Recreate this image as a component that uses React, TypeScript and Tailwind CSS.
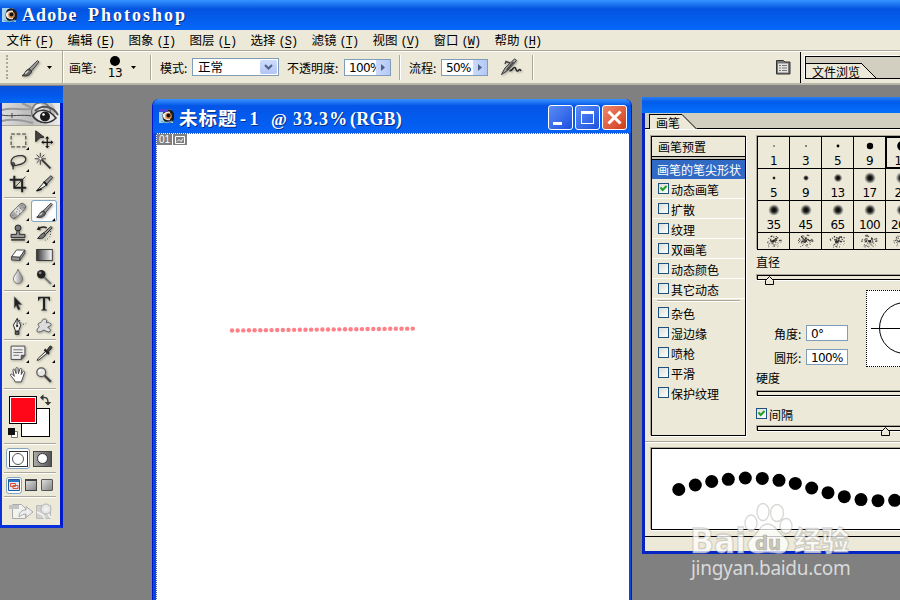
import { Fragment, type ReactNode } from "react";

const menus = [
  ["文件", "F"],
  ["编辑", "E"],
  ["图象", "I"],
  ["图层", "L"],
  ["选择", "S"],
  ["滤镜", "T"],
  ["视图", "V"],
  ["窗口", "W"],
  ["帮助", "H"],
];

const dynamics = [
  { label: "动态画笔", checked: true },
  { label: "扩散" },
  { label: "纹理" },
  { label: "双画笔" },
  { label: "动态颜色" },
  { label: "其它动态" },
];

const extras = ["杂色", "湿边缘", "喷枪", "平滑", "保护纹理"];

const brushes = [
  { size: 1, r: 0.7 },
  { size: 3, r: 0.8 },
  { size: 5, r: 1.4 },
  { size: 9, r: 3.2 },
  { size: 13, r: 4.8 },
  { size: 5, r: 1.9, soft: true },
  { size: 9, r: 3, soft: true },
  { size: 13, r: 4.4, soft: true },
  { size: 17, r: 5.8, soft: true },
  { size: 21, r: 6.2, soft: true },
  { size: 35, r: 5.8, soft: true },
  { size: 45, r: 5.8, soft: true },
  { size: 65, r: 5.8, soft: true },
  { size: 100, r: 5.8, soft: true },
  { size: 200, r: 5.8, soft: true },
];

const strokeDots = [
  [678.8, 489.5],
  [695.3, 485],
  [711.7, 481.5],
  [728.3, 479.3],
  [745.3, 478],
  [762.3, 478.4],
  [779, 480.3],
  [795.3, 483.4],
  [811.7, 488],
  [828, 492.7],
  [844.3, 496.7],
  [861, 499.6],
  [878, 500.7],
  [894.7, 500.3],
];

function BrushGlyph() {
  return (
    <>
      <path d="M18.5 2.5 20 4l-7.500 9-2.500-2.200z" fill="#999" stroke="#333" strokeWidth=".9" />
      <path d="m10 10.800 2.600 2.300c-.6 3.800-4.600 5.700-9.600 4.600 2.800-.8 3-5.600 7-6.900z" fill="#666" stroke="#222" strokeWidth=".9" />
      <path d="M6 15.500c1.500-.5 2-2 3.500-2.500" stroke="#ddd" strokeWidth="1.200" />
    </>
  );
}

const tools: { glyph: ReactNode; more?: boolean; active?: boolean }[][] = [
  [
    {
      more: true,
      glyph: <rect x="3.500" y="4.500" width="16" height="14" stroke="#222" strokeDasharray="4 2" />,
    },
    {
      glyph: (
        <>
          <path d="m2 1 9 7-4.500.5L2 13z" fill="#444" stroke="#222" />
          <path d="M14.500 8v11M9 13.500h11" stroke="#111" strokeWidth="1.300" />
          <path d="m14.500 7-2.200 2.500h4.400zM14.500 20l-2.200-2.500h4.400zM8 13.500l2.500-2.200v4.400zM21 13.500l-2.500-2.200v4.400z" fill="#111" />
        </>
      ),
    },
    {
      more: true,
      glyph: (
        <path
          d="M5.500 16C2 12 3 7 8 5s11-1 11.500 2.500S15 13.500 10 14.500c-4 .7-6-.5-5.500-2s3-.5 2.500 1.500-2.500 2.500-1 5"
          stroke="#333"
          strokeWidth="1.400"
        />
      ),
    },
    {
      glyph: (
        <>
          <path d="m8.500 8.500 9.500 9.500" stroke="#333" strokeWidth="2" />
          <path d="M7 1v4M7 9v5M1 7.500h4M9 7.500h4M3 3l2.500 2.500M11.500 3 9 5.500M3 12l2.500-2.500" stroke="#333" />
          <circle cx="7" cy="7.300" r="1.700" fill="#fff" stroke="#555" />
        </>
      ),
    },
    {
      glyph: (
        <>
          <path d="M7 2v13h13M2 6.500h13.500V20" stroke="#222" strokeWidth="2.200" />
          <path d="M7.500 14.500 19 3" stroke="#333" />
        </>
      ),
    },
    {
      more: true,
      glyph: (
        <>
          <path d="m18.500 2 2 2-6.500 7-2.500-2.500z" fill="#999" stroke="#222" />
          <path d="m11.500 8.500 2.500 2.500-2 2.500L3 18.500z" fill="#eee" stroke="#222" />
          <path d="m10.500 8.500 4 4M3 18.500l5.500-2" stroke="#111" strokeWidth="1.600" />
        </>
      ),
    },
  ],
  [
    {
      more: true,
      glyph: (
        <>
          <rect x="1" y="7.200" width="20" height="7.500" rx="3.500" transform="rotate(-45 11 11)" fill="#aaa" stroke="#666" />
          <rect x="7.500" y="7.500" width="7" height="7" transform="rotate(-45 11 11)" fill="#ddd" />
          <path d="M5 16h1M7 18h1M15 5h1M17 7h1M10 9h1M12 11h1M9 12h1M12 14h1M13 8h1" stroke="#555" />
        </>
      ),
    },
    { more: true, active: true, glyph: <BrushGlyph /> },
    {
      more: true,
      glyph: (
        <>
          <circle cx="11" cy="5.500" r="3.200" fill="#777" stroke="#222" />
          <path d="M10 8.500h2l.7 4h5.800v3.500h-15v-3.500h5.800z" fill="#999" stroke="#222" />
          <path d="M3.500 18.500h15" stroke="#222" strokeWidth="1.500" />
        </>
      ),
    },
    {
      more: true,
      glyph: (
        <>
          <path d="m18.500 4 1.500 1.300-7.500 7.500-2-1.800z" fill="#999" stroke="#222" />
          <path d="m10.500 11 2 1.800c-.5 3-4.500 5-8.500 4 2.500-1.200 3-5 6.500-5.800z" fill="#777" stroke="#222" />
          <path d="M5 6.500c3-2.500 6-2.500 9-1" stroke="#222" strokeWidth="1.400" />
          <path d="m3 7.500 4.500.5L5.500 3.500z" fill="#222" />
          <path d="M18 9c1 4-1 8-6 10" stroke="#222" strokeDasharray="1 2" />
        </>
      ),
    },
    {
      more: true,
      glyph: (
        <>
          <path d="m9.500 5.500 9 .2-5.500 7.800-9-.5z" fill="#fff" stroke="#444" />
          <path d="m4 13 9 .5v3.500l-9-.5zM13 13.500l5.500-7.800V9L13 17z" fill="#999" stroke="#444" />
        </>
      ),
    },
    {
      more: true,
      glyph: <rect x="3" y="5" width="17" height="12" fill="url(#ramp)" stroke="#333" />,
    },
    {
      more: true,
      glyph: <path d="M11 2.500c1 4 5 7 5 10.500a5 5 0 0 1-10 0C6 9.500 10 6.500 11 2.500z" fill="url(#silver)" stroke="#777" />,
    },
    {
      more: true,
      glyph: (
        <>
          <path d="m11 11 7.500 7.500" stroke="#777" strokeWidth="2" />
          <circle cx="8" cy="8" r="4.600" fill="#222" />
          <circle cx="6.800" cy="6.500" r="1.500" fill="#888" />
        </>
      ),
    },
  ],
  [
    { more: true, glyph: <path d="m7 3 8 8.500h-4l2.300 5-2 1-2.300-5L7 15.500z" fill="#222" stroke="#555" strokeWidth=".5" /> },
    {
      more: true,
      glyph: (
        <path
          d="M4.500 3h13v4.500h-1c-.3-2-1.200-2.800-3-2.800h-1.300V16c0 1 .7 1.300 2 1.300v.7H7.800v-.7c1.300 0 2-.3 2-1.300V4.700H8.500c-1.800 0-2.700.8-3 2.800h-1z"
          fill="#222"
        />
      ),
    },
    {
      more: true,
      glyph: (
        <>
          <path d="M10 3 6 10l2.300 6.500h3.400L14 10z" fill="#eee" stroke="#222" />
          <path d="M10 4v7M8 17h4v3H8z" fill="#666" stroke="#222" />
          <circle cx="10" cy="11" r="1.200" fill="#222" />
          <path d="M10 3c3 0 3 5 6 6 3 .5 4-1 5-3" stroke="#222" strokeDasharray="1 2" />
        </>
      ),
    },
    {
      more: true,
      glyph: (
        <path
          d="M9 5c1-2.500 5-2 5 .5l-.5 2c2-.8 6 .5 5 2.500-.7 1.500-3 1.500-3.500 2.500 2 1 4 3 2.500 4.500-2 1.500-5-1-7-1.500-1.500 1-5 3-7 1.500-1-2 1.500-4 2.500-5.500-1.500-1-2-3-.5-3.500C7 7.500 8.500 7 9 5z"
          fill="#ddd"
          stroke="#555"
        />
      ),
    },
  ],
  [
    {
      more: true,
      glyph: (
        <>
          <path d="M3.500 3.500h15v10l-4 4.500h-11z" fill="#eee" stroke="#444" />
          <path d="M18.500 13.500h-4V18z" fill="#777" stroke="#444" />
          <path d="M6 7.500h10M6 10.500h10M6 13.500h6" stroke="#666" />
        </>
      ),
    },
    {
      more: true,
      glyph: (
        <>
          <path d="m13 9-8.500 8-1 2 2-.5L14.500 11z" fill="#eee" stroke="#222" />
          <path d="m11.500 7 5 5" stroke="#222" strokeWidth="2.500" />
          <path d="m14 8.500 3-4.500c1-1.500 3.500.5 2.200 2L15.500 10z" fill="#444" stroke="#222" />
        </>
      ),
    },
    {
      glyph: (
        <path
          d="M8 18.500c-1-3-3.500-5-5-7-.8-1.300 1-2 2-1l2 2L5.500 6c-.3-1.500 1.500-1.800 2-.5L9 9.500 8.700 4c0-1.500 2-1.500 2.200 0l.6 5.500L13 4.500c.5-1.300 2.200-.8 2 .5l-.5 5.500 1.800-3.200c.8-1 2.200-.3 1.800 1l-2 6-1.600 4.200z"
          fill="#fff"
          stroke="#444"
        />
      ),
    },
    {
      glyph: (
        <>
          <path d="m11 11 7.500 7.500" stroke="#444" strokeWidth="2.600" />
          <circle cx="8" cy="8" r="4.800" fill="#e5e5e5" stroke="#555" strokeWidth="1.300" />
          <path d="M5.500 8c0-2 1-2.500 2.500-2.500" stroke="#fff" strokeWidth="1.200" />
        </>
      ),
    },
  ],
];

function Icon({ children }: { children: ReactNode }) {
  return (
    <svg width="22" height="22" viewBox="0 0 22 22" fill="none" className="drop-shadow-[1px_1px_1px_rgba(0,0,0,0.3)]">
      {children}
    </svg>
  );
}

function Rule() {
  return <div className="h-[2px] w-[52px] ml-[2px] shrink-0 border-t border-t-[#aca899] border-b border-b-white" />;
}

function VRule() {
  return <div className="w-[2px] h-[25px] shrink-0 border-l border-l-[#aca899] border-r border-r-white" />;
}

function Caret() {
  return (
    <svg width="5" height="3" className="shrink-0">
      <path d="M0 0h5L2.500 3z" fill="#000" />
    </svg>
  );
}

// eye logo of the application
function EyeLogo({ doc }: { doc?: boolean }) {
  return (
    <svg width="16" height="16" viewBox="0 0 16 16" className="shrink-0">
      <path d="M0 1h11l3 4v10H0z" fill="#a9d3ea" />
      <path d="M5 3c3-3 9-2 10 3v5c-1 4-6 5-9 3-3-3-3-8-1-11z" fill="#1b1c22" />
      <path d="M4 6c2-2 5-3 7-2v8c-3 1-6-1-7-3z" fill="#f0eee6" />
      <circle cx="9.500" cy="8" r="3.300" fill="#d98b4a" />
      <circle cx="9.500" cy="7.500" r="2" fill="#111" />
      <path d="M2 13c3 2 8 2 11 0" stroke="#6fa9cf" strokeWidth="1.500" fill="none" />
      {doc && <path d="M0 1h9v3H0z" fill="#4b44d8" />}
    </svg>
  );
}

function Checkbox({ checked }: { checked?: boolean }) {
  return (
    <div className="w-[11px] h-[11px] shrink-0 border border-[#1c5180] bg-linear-to-br from-[#dcdcd7] to-white">
      {checked && (
        <svg width="9" height="9" viewBox="0 0 9 9" fill="none">
          <path d="M1.500 3.500 3.700 6 7.500 2" stroke="#21a121" strokeWidth="2" />
        </svg>
      )}
    </div>
  );
}

function ValueStepper({ value }: { value: string }) {
  return (
    <div className="w-[47px] h-[17px] shrink-0 flex bg-white border border-[#7f9db9]">
      <div className="w-[31px] shrink-0 pl-[4px] overflow-hidden font-['DejaVu_Sans'] text-[12px] leading-[17px] tracking-[-0.600px]">
        {value}
      </div>
      <div className="flex-1 bg-linear-to-r from-[#cbdafd] to-[#b4c8f6] flex items-center justify-center">
        <svg width="4" height="7">
          <path d="M0 0v7l4-3.500z" fill="#4d6185" />
        </svg>
      </div>
    </div>
  );
}

function SliderBar({ thumb }: { thumb?: string }) {
  return (
    <div className="relative h-[5px] w-[150px] ml-[1px] shrink-0 border border-black shadow-[-1px_-1px_0_#aca899,0_1px_0_#fff]">
      {thumb && (
        <svg width="9" height="10" className={`absolute top-0 ${thumb}`}>
          <path d="M.5 8.500v-4l4-4 4 4v4z" fill="#ece9d8" stroke="#000" />
        </svg>
      )}
    </div>
  );
}

function TopBars() {
  return (
    <>
      <header className="h-[30px] shrink-0 flex items-center pl-[2px] gap-[4px] bg-linear-to-b from-[#3593ff] via-[#0453e0] via-30% to-[#0668fa]">
        <EyeLogo />
        <h1 className="flex gap-[11px] font-['Liberation_Serif'] font-bold text-[18px] leading-[30px] text-white [text-shadow:1px_1px_0_#0a2f86] whitespace-nowrap">
          <span className="w-[55px] tracking-[1.100px]">Adobe</span>
          <span className="tracking-[2px]">Photoshop</span>
        </h1>
      </header>

      <nav className="h-[20px] shrink-0 flex pl-[6.5px] bg-[#ece9d8] text-[12.500px] leading-[19px]">
        {menus.map(([name, key]) => (
          <div key={key} className="w-[61px] shrink-0 whitespace-nowrap">
            {name}
            <span className="font-['Liberation_Mono'] text-[12px] tracking-[-1px] ml-[3px]">
              (<u className="underline-offset-2">{key}</u>)
            </span>
          </div>
        ))}
      </nav>

      <div className="h-[35px] shrink-0 flex bg-[#ece9d8] border-t border-t-[#aca899] border-b-2 border-b-[#b9b6a6] shadow-[inset_0_1px_0_#fff]">
        <div className="w-[62px] shrink-0 flex items-center pl-[6px]">
          <div className="w-[2px] h-[24px] border-l-2 border-dotted border-[#aca899]" />
          <div className="ml-[13px] w-[20px] mt-[1px]">
            <svg width="20" height="18" viewBox="2 1 20 18" fill="none" className="drop-shadow-[1px_1px_1px_rgba(0,0,0,0.3)]">
              <BrushGlyph />
            </svg>
          </div>
          <div className="ml-[6px]">
            <Caret />
          </div>
        </div>
        <div className="w-[2px] border-l border-l-[#aca899] border-r border-r-white" />
        <div className="flex items-center pl-[5px] text-[12px] leading-[16px] whitespace-nowrap">
          <span className="w-[38px] pt-px">画笔:</span>
          <div className="w-[16px] flex flex-col items-center">
            <div className="w-[10px] h-[10px] rounded-full bg-black mt-[3px]" />
            <span className="font-['DejaVu_Sans'] text-[12px] leading-[15px] tracking-[-0.500px]">13</span>
          </div>
          <div className="ml-[8px] mr-[14px]">
            <Caret />
          </div>
          <VRule />
          <span className="w-[32px] ml-[8px] pt-px">模式:</span>
          <div className="w-[87px] h-[18px] flex items-center justify-between bg-white border border-[#7f9db9] pl-[5px] pr-px text-[12.500px]">
            正常
            <div className="w-[17px] h-[14px] rounded-[2px] bg-linear-to-b from-[#cfdcfd] to-[#b1c5f5] flex items-center justify-center">
              <svg width="9" height="6" fill="none">
                <path d="m1 1 3.500 3.500L8 1" stroke="#4d6185" strokeWidth="2" />
              </svg>
            </div>
          </div>
          <span className="w-[57px] ml-[8px] pt-px">不透明度:</span>
          <ValueStepper value="100%" />
          <div className="ml-[8px]">
            <VRule />
          </div>
          <span className="w-[32px] ml-[8px] pt-px">流程:</span>
          <ValueStepper value="50%" />
          <svg width="22" height="18" viewBox="0 0 22 18" fill="none" className="ml-[12px] mr-[10px] drop-shadow-[1px_1px_1px_rgba(0,0,0,0.3)]">
            <path d="m14.500 1 2 1.500L8 12l-6.500 4.500L5 10z" fill="#aaa" stroke="#333" />
            <path d="M10 5 6 3.500 5 6M13.500 4 6.500 12" stroke="#444" strokeWidth="1.400" />
            <path d="M9.500 12.500c3 1 3-3 5-3s1 4 3 3.500c1.500-.5 2-3 3.500 0" stroke="#222" strokeWidth="1.500" />
          </svg>
          <VRule />
        </div>
        <div className="flex-1 flex items-center justify-end">
          <svg width="16" height="16" viewBox="0 0 16 16" fill="none" className="mr-[9px]">
            <path d="M1.500 1.500h7l1.500 1.500H15v12H1.500z" fill="#777" stroke="#333" />
            <path d="M3 4.500h10v9H3z" fill="#e4e4e0" />
            <path d="M4 6.500h2M4 9h2M4 11.500h2M7 6.500h5M7 9h5M7 11.500h5" stroke="#777" />
          </svg>
          <div className="w-px h-[31px] bg-black" />
        </div>
        <div className="w-[99px] pl-[4px] pt-[5px] shrink-0">
          <div className="h-[23px] border border-r-0 border-black bg-[#d2cfc0] flex flex-col shadow-[-1px_-1px_0_#fff]">
            <div className="h-[7px] shrink-0 border-b border-black mr-[38px]" />
            <div className="h-[14px] flex">
              <div className="w-[55px] pl-[6px] bg-[#ece9d8] text-[12px] leading-[15px] whitespace-nowrap">文件浏览</div>
              <svg width="16" height="15" className="-mt-px shrink-0">
                <path d="M0 0 15 15H0z" fill="#ece9d8" />
                <path d="M0 0 15 15" stroke="#000" />
              </svg>
            </div>
          </div>
        </div>
      </div>
    </>
  );
}

function Toolbox() {
  return (
    <aside className="absolute left-0 top-[1px] w-[63px] h-[442px] flex flex-col bg-[#ece9d8] border-l-2 border-r-3 border-b-3 border-[#0831d9] border-r-[#0019c9]">
      <div className="h-[17px] -ml-[2px] -mr-[3px] shrink-0 bg-linear-to-b from-[#0b50d8] via-[#0257ea] to-[#0467f8]" />
      <svg width="58" height="23" className="shrink-0">
        <rect width="58" height="23" fill="url(#hair)" />
        <path d="M0 7c12-4 22 2 32-2M0 18c10-3 20-1 31 2M20 0l12 6" stroke="#999" strokeWidth="2" fill="none" />
        <path d="M0 12c8 2 20-1 30 1M10 10v5" stroke="#444" fill="none" />
        <circle cx="41" cy="9" r="12.500" fill="#c4c4c4" />
        <circle cx="39" cy="9" r="9.500" fill="none" stroke="#777" strokeWidth="1.500" />
        <circle cx="37" cy="5" r="4" fill="#f2f2f2" />
        <path d="M31 13c5-8 15-8 23 2-7 7-17 6-23-2z" fill="#e6e6e6" stroke="#333" strokeWidth="1.500" />
        <path d="M33 8C40 1 51 3 56 12" stroke="#555" strokeWidth="2" fill="none" />
        <circle cx="43" cy="13.500" r="5" fill="#1a1a1a" />
        <circle cx="41.500" cy="11.500" r="1.300" fill="#fff" />
        <path d="M0 22.500h58" stroke="#aca899" />
      </svg>
      <div className="h-[3px]" />
      {tools.map((group, g) => (
        <Fragment key={g}>
          <div className="grid grid-cols-[26px_26px] ml-[3px] mb-[2px]">
            {group.map((tool, i) => (
              <div
                key={i}
                className={
                  tool.active
                    ? "relative w-[26px] h-[22px] flex items-center justify-center rounded-[3px] bg-white shadow-[inset_0_0_0_1px_#7fa5c7]"
                    : "relative h-[22px] flex items-center justify-center"
                }
              >
                <div className="scale-[0.92]">
                  <Icon>{tool.glyph}</Icon>
                </div>
                {tool.more && (
                  <svg width="3" height="3" className="absolute right-[2px] bottom-[1px]">
                    <path d="M3 0v3H0z" fill="#000" />
                  </svg>
                )}
              </div>
            ))}
          </div>
          <Rule />
          <div className="h-px shrink-0" />
        </Fragment>
      ))}

      <svg width="56" height="52" viewBox="2 391 56 52" fill="none" className="shrink-0">
        <rect x="21.500" y="408.500" width="28" height="28" fill="#fff" stroke="#000" />
        <rect x="9.500" y="396.500" width="27" height="27" fill="#fff" stroke="#000" />
        <rect x="11" y="398" width="24" height="24" fill="#ff0718" />
        <path d="M41.500 397.500h3c2.500 0 3.500 1.500 3.500 5" stroke="#444" strokeWidth="1.500" />
        <path d="m40 397.500 3.500-3.300v6.600zM48 405.500l-3.300-3.500h6.600z" fill="#333" />
        <path d="M11.500 431.500h6v6h-6z" fill="#fff" stroke="#777" />
        <path d="M8 428h7v7H8z" fill="#111" />
      </svg>
      <Rule />
      <div className="h-[27px] shrink-0 flex items-center pl-[4px] gap-[3px]">
        <div className="w-[24px] h-[21px] rounded-[3px] border border-[#7fa5c7] bg-white flex items-center justify-center">
          <div className="w-[19px] h-[16px] border border-[#333] flex items-center justify-center">
            <div className="w-[12px] h-[12px] rounded-full border border-[#555] bg-white" />
          </div>
        </div>
        <div className="w-[19px] h-[16px] border border-[#444] bg-linear-to-r from-[#aaa] to-[#555] flex items-center justify-center">
          <div className="w-[11px] h-[11px] rounded-full border border-[#333] bg-white" />
        </div>
      </div>
      <Rule />
      <div className="h-[22px] shrink-0 flex items-center pl-[4px]">
        <div className="w-[16px] h-[17px] rounded-[3px] border border-[#7fa5c7] bg-white flex items-center justify-center">
          <svg width="12" height="12" fill="none">
            <path d="M.5.5h11v11H.500z" fill="#dbe6f7" stroke="#1f5b9c" />
            <path d="M1 2h10" stroke="#2d74c4" strokeWidth="2" />
            <path d="M2.500 4.500h5v3h-5zM5 6.500h5v3H5z" stroke="#e0502a" />
          </svg>
        </div>
        <div className="w-[12px] h-[12px] ml-[3px] border border-[#444] border-t-2 bg-linear-to-br from-[#ddd] to-[#888]" />
        <div className="w-[12px] h-[12px] ml-[4px] border border-[#555] rounded-[1px] bg-linear-to-br from-[#ddd] to-[#888]" />
      </div>
      <Rule />
      <svg width="50" height="19" className="mt-[4px] ml-[6px] shrink-0" fill="none">
        <path d="M4.500 2.500h9l4 4v10h-13z" fill="#f2f2ee" stroke="#aaa" />
        <path d="M1 3h10v4H1z" fill="#c3c3c3" />
        <path d="M11 15c0-5 3-7 7-7V4.500l7 5.500-7 5.500V12c-3 0-4 1-7 3z" fill="#eee" stroke="#aaa" />
        <path d="M28.500 3.500h14v13h-14z" fill="#d0d0cc" stroke="#bbb" />
        <circle cx="38" cy="7" r="5" fill="#e8e8e8" stroke="#b5b5b5" />
        <path d="m29 10 6 3 2 4M36 7h4M38 5v4M40 12l3 4" stroke="#f4f4f4" strokeWidth="1.500" />
      </svg>
    </aside>
  );
}

function DocumentWindow() {
  return (
    <section className="absolute left-[152px] top-[14px] w-[480px] h-[520px] flex flex-col rounded-t-[7px] overflow-hidden bg-[#0a47df] border-l border-r border-[#0019cf]">
      <div className="h-[34px] shrink-0 flex items-center pl-[6px] pr-[4px] bg-linear-to-b from-[#3a93ff] via-[#0355e6] via-20% to-[#0562f6]">
        <EyeLogo doc />
        <h2 className="ml-[4px] mt-[2px] flex items-baseline text-white [text-shadow:1px_1px_0_#0a2f86] whitespace-nowrap font-['Liberation_Serif'] font-bold text-[18px]">
          <span className="w-[61px] text-[18.500px] leading-[30px] tracking-[1px] font-bold font-['Noto_Sans_CJK_SC']">未标题</span>
          <span className="w-[31px] tracking-[3.500px]">-1</span>
          <span className="w-[22px] text-[17px]">@</span>
          <span className="w-[57px] tracking-[1.200px]">33.3%</span>
          <span className="tracking-[0.200px]">(RGB)</span>
        </h2>
        <div className="ml-auto mt-[2px] flex gap-[2px]">
          <div className="w-[25px] h-[25px] rounded-[3px] border border-white bg-linear-to-br from-[#5b8bf5] to-[#1c4fe0] flex items-end pl-[4px] pb-[4px]">
            <div className="w-[9px] h-[3px] bg-white" />
          </div>
          <div className="w-[25px] h-[25px] rounded-[3px] border border-white bg-linear-to-br from-[#5b8bf5] to-[#1c4fe0] flex items-center justify-center">
            <div className="w-[13px] h-[13px] border border-t-3 border-white" />
          </div>
          <div className="w-[25px] h-[25px] rounded-[3px] border border-white bg-linear-to-br from-[#f0866a] to-[#cf3a12] flex items-center justify-center">
            <svg width="15" height="15">
              <path d="m1.500 1.500 12 12m0-12-12 12" stroke="#fff" strokeWidth="3" />
            </svg>
          </div>
        </div>
      </div>
      <div className="flex-1 ml-[3px] mr-[2px] bg-white border-t border-l border-dotted border-[#3560c0]">
        <div className="flex gap-px text-white font-['Liberation_Sans'] text-[10px] leading-[11px]">
          <span className="w-[15px] h-[11px] bg-[#808080] text-center">01</span>
          <span className="w-[14px] h-[11px] bg-[#808080] flex items-center justify-center">
            <svg width="10" height="8" fill="none" stroke="#fff">
              <path d="M.5.5h9v7h-9zM2 5.500l2-2 2 2 2-3" />
            </svg>
          </span>
        </div>
        <svg width="200" height="12" className="mt-[179px] ml-[70px]">
          {Array.from({ length: 33 }, (_, i) => (
            <circle key={i} cx={5 + i * 5.65} cy={6.5 - i * 0.06} r="2.200" fill="#ff8088" />
          ))}
        </svg>
      </div>
    </section>
  );
}

function BrushList() {
  return (
    <div className="w-[95px] h-[300px] shrink-0 flex flex-col border border-black shadow-[-1px_-1px_0_#aca899,1px_1px_0_#fff] text-[12px] whitespace-nowrap">
      <div className="h-[20px] shrink-0 border-b border-black pl-[6px] leading-[20px]">画笔预置</div>
      <div className="h-[3px] shrink-0 bg-[#c8c5b5] border-b border-black" />
      <div className="h-[19px] shrink-0 bg-[#316ac5] text-white pl-[5px] leading-[19px]">画笔的笔尖形状</div>
      {dynamics.map((item) => (
        <div key={item.label} className="h-[20px] shrink-0 flex items-center gap-[2px] pl-[6px] border-b border-white">
          <div className="-mt-[1px]">
            <Checkbox checked={item.checked} />
          </div>
          <span className="mt-[3px] leading-[16px]">{item.label}</span>
        </div>
      ))}
      <div className="h-[2px] mx-[5px] shrink-0 border-t border-t-[#aca899] border-b border-b-white mb-px mt-px" />
      {extras.map((label) => (
        <div key={label} className="h-[20px] shrink-0 flex items-center gap-[2px] pl-[6px]">
          <div className="-mt-[2px]">
            <Checkbox />
          </div>
          <span className="mt-[2px] leading-[16px]">{label}</span>
        </div>
      ))}
    </div>
  );
}

// scattered specks of the textured brushes
function Spatter({ seed }: { seed: number }) {
  return (
    <svg width="31" height="16" className="block">
      {Array.from({ length: 75 }, (_, i) => {
        const a = Math.abs(Math.sin(i * 127.1 + seed * 311.7) * 43758.5) % 1;
        const b = Math.abs(Math.sin(i * 269.5 + seed * 183.3) * 24634.6) % 1;
        const angle = a * Math.PI * 2;
        return (
          <circle
            key={i}
            cx={15.5 + Math.cos(angle) * b * 8}
            cy={8.5 + Math.sin(angle) * b * 7}
            r={0.35 + a * 0.45}
            fill="#222"
            fillOpacity=".8"
          />
        );
      })}
    </svg>
  );
}

function BrushControls() {
  return (
    <div className="ml-[10px] w-[162px] shrink-0 flex flex-col text-[12px] leading-[16px]">
      <div className="ml-[1px] w-[161px] shrink-0 grid grid-cols-[repeat(5,32px)] border-l border-t border-black shadow-[-1px_-1px_0_#aca899]">
        {brushes.map((b, i) => (
          <div
            key={i}
            className={
              b.size === 13 && !b.soft
                ? "h-[32px] flex flex-col items-center border-r border-b border-black shadow-[inset_1px_1px_0_#000,inset_0_-1px_0_#000]"
                : "h-[32px] flex flex-col items-center border-r border-b border-black"
            }
          >
            <svg width="16" height="16" className="mt-[1px] shrink-0">
              <circle cx="8" cy="8" r={b.r} fill={b.soft ? "url(#soft)" : "#000"} />
            </svg>
            <span className="font-['DejaVu_Sans'] text-[12px] leading-[14px] tracking-[-0.600px]">{b.size}</span>
          </div>
        ))}
        {[1, 2, 3, 4, 5].map((n) => (
          <div key={n} className="h-[17px] border-r border-b border-black">
            <Spatter seed={n} />
          </div>
        ))}
      </div>
      <div className="mt-[4px] h-[21px]">直径</div>
      <SliderBar thumb="left-[7px]" />
      <div className="h-[90px] flex pt-[10px]">
        <div className="w-[110px] shrink-0 pt-[35px] pl-[18px] flex flex-col gap-[8px]">
          {[
            ["角度:", "0°"],
            ["圆形:", "100%"],
          ].map(([label, value]) => (
            <div key={label} className="flex h-[16px] whitespace-nowrap">
              <span className="w-[32px] leading-[18px]">{label}</span>
              <div className="w-[42px] h-[16px] bg-white border border-[#7f9db9] pl-[4px] font-['DejaVu_Sans'] leading-[17px] tracking-[-0.600px]">
                {value}
              </div>
            </div>
          ))}
        </div>
        <div className="w-[78px] h-[77px] shrink-0 bg-white border border-dotted border-black">
          <svg width="76" height="75" fill="none" stroke="#000">
            <circle cx="38" cy="37" r="25.500" />
            <path d="M4 37.500h68" />
          </svg>
        </div>
      </div>
      <div className="h-[21px]">硬度</div>
      <SliderBar />
      <div className="h-[30px] flex pt-[12px] gap-[2px]">
        <Checkbox checked />
        <span className="leading-[14px]">间隔</span>
      </div>
      <SliderBar thumb="left-[123px]" />
    </div>
  );
}

function BrushPanel() {
  return (
    <section className="absolute left-[642px] top-[12px] w-[270px] h-[457px] flex flex-col bg-[#ece9d8] border-l-3 border-b-3 border-[#0626c4]">
      <div className="h-[16px] -ml-[3px] shrink-0 bg-linear-to-b from-[#2a7df0] via-[#025cec] via-30% to-[#0670fb]" />
      <div className="h-[16px] shrink-0 flex bg-[#d2cfc0]">
        <div className="w-[4px] border-b border-black" />
        <div className="w-[33px] mt-px pl-[6px] border-l border-t border-black bg-[#ece9d8] text-[12px] leading-[15px] whitespace-nowrap">
          画笔
        </div>
        <svg width="15" height="16" className="shrink-0">
          <path d="M0 1.500 14 16H0z" fill="#ece9d8" />
          <path d="M0 1.500 14.500 16" stroke="#000" />
        </svg>
        <div className="flex-1 border-b border-black" />
      </div>
      <div className="h-[313px] shrink-0 flex pt-[6px] pl-[6px] border-t border-white border-b border-b-[#aca899]">
        <BrushList />
        <BrushControls />
      </div>
      <div className="pt-[5px] pl-[6px] border-t border-white">
        <div className="h-[82px] bg-white border border-black shadow-[-1px_-1px_0_#aca899,0_1px_0_#fff]">
          <svg width="260" height="80" viewBox="652 449 260 80">
            {strokeDots.map(([x, y]) => (
              <circle key={x} cx={x} cy={y} r="6.500" />
            ))}
          </svg>
        </div>
      </div>
      <div className="mt-[6px] border-t border-black" />
    </section>
  );
}

function Watermark() {
  return (
    <div className="absolute left-[686px] top-[500px] w-[180px] h-[90px] pointer-events-none">
      <svg width="180" height="56" viewBox="686 500 180 56" className="block">
        <g fill="#fff" fillOpacity=".75" stroke="#8c8c84" strokeOpacity=".35" strokeWidth="1.300">
          <ellipse cx="751" cy="523" rx="6" ry="8" />
          <ellipse cx="763" cy="512" rx="6" ry="8.500" />
          <ellipse cx="777" cy="513" rx="6.500" ry="8.500" />
          <ellipse cx="786" cy="526" rx="6" ry="7.500" />
          <path d="M768 524c7 0 9 7 14 11 6 4 8 9 5 14-2 5-7 5-12 4-5-.7-9-.7-14 0-5 .8-10 0-12-4-3-6 1-10 6-14 5-5 6-11 13-11z" />
          <text x="690" y="553" fontFamily="DejaVu Sans, sans-serif" fontWeight="700" fontSize="34" textLength="56" lengthAdjust="spacingAndGlyphs">
            Bai
          </text>
          <text x="794" y="551" fontFamily="Noto Sans CJK SC, sans-serif" fontWeight="900" fontSize="27" textLength="55" lengthAdjust="spacingAndGlyphs">
            经验
          </text>
        </g>
        <text x="755" y="550" fontFamily="DejaVu Sans, sans-serif" fontWeight="700" fontSize="20" textLength="26" lengthAdjust="spacingAndGlyphs" fill="#c9c7bb" stroke="#a9a79d" strokeWidth=".6">
          du
        </text>
      </svg>
      <p className="pl-[5px] font-['Noto_Sans'] text-[19px] leading-[24px] tracking-[-0.300px] text-[#dadada] whitespace-nowrap">
        jingyan.baidu.com
      </p>
    </div>
  );
}

export default function App() {
  return (
    <div className="relative w-[900px] h-[600px] overflow-hidden flex flex-col bg-[#808080] text-black font-['Noto_Sans_CJK_SC',sans-serif]">
      <svg width="0" height="0" className="absolute">
        <defs>
          <linearGradient id="ramp">
            <stop stopColor="#333" />
            <stop offset="1" stopColor="#fff" />
          </linearGradient>
          <linearGradient id="silver">
            <stop stopColor="#fff" />
            <stop offset="1" stopColor="#888" />
          </linearGradient>
          <linearGradient id="hair">
            <stop stopColor="#ddd" />
            <stop offset=".5" stopColor="#bbb" />
            <stop offset="1" stopColor="#eee" />
          </linearGradient>
          <radialGradient id="soft">
            <stop stopColor="#000" />
            <stop offset=".4" stopColor="#222" />
            <stop offset="1" stopColor="#222" stopOpacity="0" />
          </radialGradient>
        </defs>
      </svg>
      <TopBars />
      <main className="relative flex-1">
        <Toolbox />
        <DocumentWindow />
        <BrushPanel />
      </main>
      <Watermark />
    </div>
  );
}
